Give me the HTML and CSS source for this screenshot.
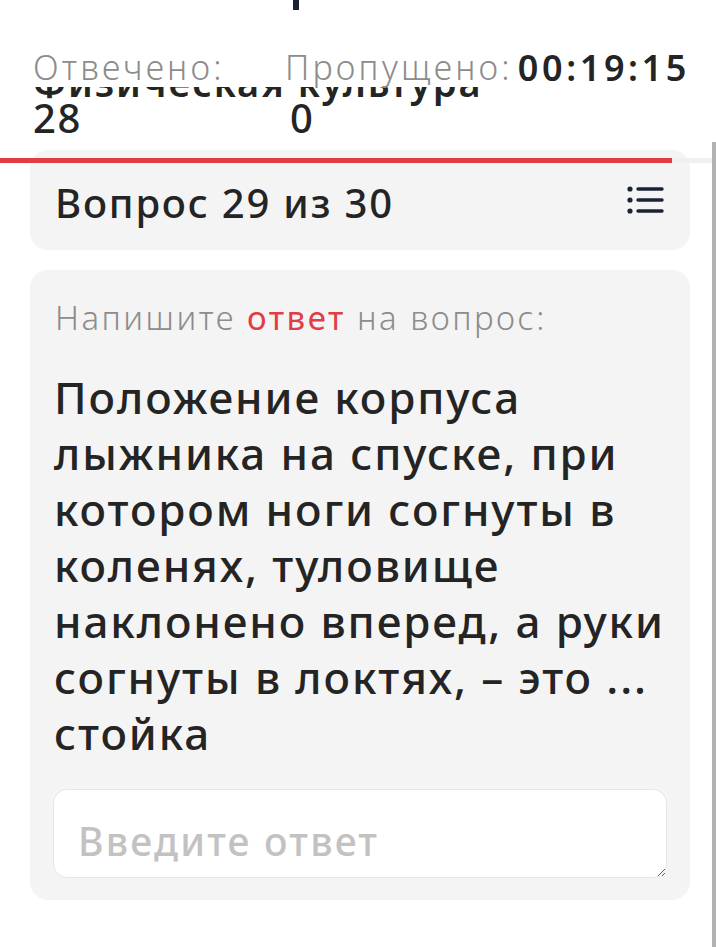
FILE: index.html
```html
<!DOCTYPE html>
<html lang="ru">
<head>
  <meta charset="UTF-8">
  <meta name="viewport" content="width=device-width, initial-scale=1.0">
  <title>Тест: Физическая культура</title>
  <link rel="stylesheet" href="styles.css">
</head>
<body>
  <div class="page">
    <header class="test-head">
      <div class="head-cut"></div>
      <h1 class="subject">Физическая культура</h1>
      <div class="stats">
        <div class="stat stat-done">
          <div class="stat-label">Отвечено:</div>
          <div class="stat-value">28</div>
        </div>
        <div class="stat stat-skip">
          <div class="stat-label">Пропущено:</div>
          <div class="stat-value">0</div>
        </div>
        <div class="timer">00:19:15</div>
      </div>
      <div class="progress">
        <div class="progress-bar" style="width: 94.4%"></div>
      </div>
    </header>

    <section class="card q-nav">
      <div class="q-count">Вопрос 29 из 30</div>
      <svg class="q-list" width="38" height="30" viewBox="0 0 38 30">
        <circle cx="4" cy="4" r="2.6" fill="#1b2333"/>
        <circle cx="4" cy="15" r="2.6" fill="#1b2333"/>
        <circle cx="4" cy="26" r="2.6" fill="#1b2333"/>
        <g stroke="#1b2333" stroke-width="3.4" stroke-linecap="round">
          <line x1="12" y1="4" x2="36" y2="4"/>
          <line x1="12" y1="15" x2="36" y2="15"/>
          <line x1="12" y1="26" x2="36" y2="26"/>
        </g>
      </svg>
    </section>

    <section class="card q-body">
      <div class="q-hint">Напишите <span class="accent">ответ</span> на вопрос:</div>
      <div class="q-text">Положение корпуса лыжника на спуске, при котором ноги согнуты в коленях, туловище наклонено вперед, а руки согнуты в локтях, – это ... стойка</div>
      <textarea class="answer" placeholder="Введите ответ"></textarea>
    </section>
  </div>
  <div class="scrollbar"></div>
</body>
</html>
```

FILE: styles.css
```css
:root {
  --text: #242424;
  --muted: #8c8c8c;
  --accent: #e23c44;
  --card-bg: #f4f4f4;
  --navy: #1b2333;
}

html, body {
  margin: 0;
  background: #fff;
  overflow: hidden;
}

body {
  font-family: "Noto Sans", Arial, sans-serif;
  color: var(--text);
}

.page {
  width: 712px;
}

/* header with subject, counters and timer */
.head-cut {
  width: 6px;
  height: 10px;
  margin-left: 293px;
  background: var(--navy);
}

.subject {
  margin: 50px 0 0 33px;
  font-size: 38px;
  font-weight: 600;
  line-height: 44px;
  letter-spacing: 2px;
  color: var(--text);
}

.stats {
  position: relative;
  z-index: 1;
  display: flex;
  align-items: flex-start;
  margin-top: -54px;
  padding: 0 22px 0 33px;
}
.stat-done {
  flex: 1;
}
.stat-skip .stat-value {
  padding-left: 5px;
}
.stat-label {
  background: #fff;
  padding-bottom: 3px;
  font-size: 34px;
  font-weight: 300;
  line-height: 34px;
  letter-spacing: 3.2px;
  color: var(--muted);
}
.stat-value {
  margin-top: 11px;
  font-size: 40px;
  font-weight: 500;
  line-height: 40px;
  letter-spacing: 1.5px;
  color: var(--text);
}
.timer {
  margin: 1px 0 0 5px;
  font-size: 36px;
  font-weight: 600;
  line-height: 34px;
  letter-spacing: 3.6px;
  color: var(--text);
}

.progress {
  position: relative;
  z-index: 2;
  height: 5px;
  margin-top: 20px;
  background: #f0f0f0;
}
.progress-bar {
  height: 100%;
  background: var(--accent);
}

/* cards */
.card {
  background: var(--card-bg);
  border-radius: 18px;
  margin: 0 22px 0 30px;
}

.q-nav {
  display: flex;
  align-items: center;
  justify-content: space-between;
  height: 100px;
  margin-top: -13px;
  padding: 0 26px 0 25px;
}
.q-count {
  font-size: 40px;
  font-weight: 500;
  letter-spacing: 1.8px;
  padding-top: 4px;
}
.q-list {
  display: block;
}

.q-body {
  margin-top: 20px;
  padding: 28px 23px 22px;
}
.q-hint {
  padding-left: 2px;
  font-size: 33px;
  font-weight: 300;
  line-height: 40px;
  letter-spacing: 2.5px;
  color: var(--muted);
}
.q-hint .accent {
  color: var(--accent);
  font-weight: 400;
}
.q-text {
  margin-top: 31px;
  padding-left: 1px;
  font-size: 44px;
  font-weight: 500;
  line-height: 56px;
  letter-spacing: 1.9px;
}

.answer {
  display: block;
  box-sizing: border-box;
  width: 100%;
  height: 89px;
  margin-top: 28px;
  padding: 31px 24px 0;
  border: 1px solid #e6e6e6;
  border-radius: 14px;
  background: #fff;
  font-family: inherit;
  font-size: 39px;
  font-weight: 500;
  line-height: 40px;
  letter-spacing: 2.2px;
  color: var(--text);
  outline: none;
}
.answer::placeholder {
  color: #c2c2c2;
}

.scrollbar {
  position: fixed;
  top: 142px;
  right: 0;
  bottom: 0;
  width: 4px;
  background: #b2b2b2;
}
```
